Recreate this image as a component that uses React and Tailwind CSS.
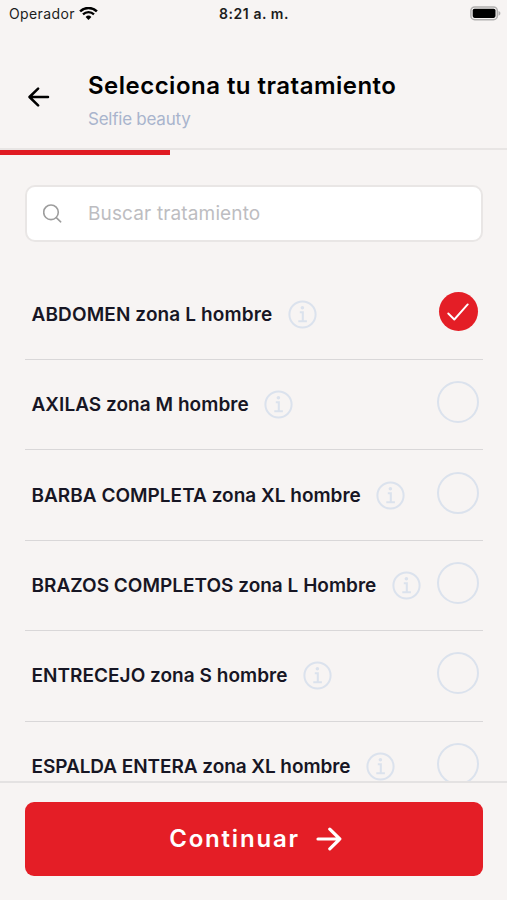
import React, { useState } from "react";

const treatments = [
  { id: 1, name: "ABDOMEN zona L hombre", tracking: "tracking-[0.12px]" },
  { id: 2, name: "AXILAS zona M hombre", tracking: "tracking-[0.04px]" },
  { id: 3, name: "BARBA COMPLETA zona XL hombre", tracking: "tracking-[0.01px]" },
  { id: 4, name: "BRAZOS COMPLETOS zona L Hombre", tracking: "tracking-[0.01px]" },
  { id: 5, name: "ENTRECEJO zona S hombre", tracking: "tracking-[0.03px]" },
  { id: 6, name: "ESPALDA ENTERA zona XL hombre", tracking: "tracking-[-0.06px]" },
];

const WifiIcon = () => (
  <svg width="19" height="14" viewBox="0 0 19 14" fill="none">
    <path d="M1.1 4.4a12.1 12.1 0 0 1 16.8 0" stroke="#000" strokeWidth="2.5" />
    <path d="M4 7.4a8 8 0 0 1 11 0" stroke="#000" strokeWidth="2.3" />
    <path d="M6.6 10a4.2 4.2 0 0 1 5.8 0L9.5 13z" fill="#000" />
  </svg>
);

const BatteryIcon = () => (
  <svg width="31" height="15" viewBox="0 0 31 15" fill="none">
    <rect x="0.9" y="0.9" width="26.4" height="12.8" rx="3.8" stroke="#b1afaf" strokeWidth="1.5" />
    <rect x="2.7" y="2.7" width="22.8" height="9.2" rx="1.8" fill="#000" />
    <path d="M28.5 5c1.3.5 1.9 1.3 1.9 2.3s-.6 1.9-1.9 2.4z" fill="#b1afaf" />
  </svg>
);

const BackIcon = () => (
  <svg width="22" height="20" viewBox="0 0 22 20" fill="none" stroke="#000" strokeWidth="2.5" strokeLinecap="round" strokeLinejoin="round">
    <path d="M20 10H1.7M10.1 1.6 1.5 10l8.6 8.4" />
  </svg>
);

const SearchIcon = () => (
  <svg width="20" height="20" viewBox="0 0 20 20" fill="none" stroke="#9d9d9d" strokeWidth="1.6" strokeLinecap="round">
    <circle cx="8" cy="8.3" r="7.3" />
    <path d="m13.3 13.6 4.4 4.2" />
  </svg>
);

const InfoIcon = () => (
  <svg className="shrink-0" width="29" height="29" viewBox="0 0 29 29" fill="none" stroke="#dbe2ed">
    <circle cx="14.5" cy="14.5" r="13.1" strokeWidth="2" />
    <path d="M11.8 12.2h3v9M10.3 21.2h8.6" strokeWidth="2.1" />
    <circle cx="14.4" cy="7.7" r="1.8" fill="#dbe2ed" stroke="none" />
  </svg>
);

const CheckIcon = () => (
  <svg width="22" height="18" viewBox="0 0 22 18" fill="none" stroke="#fff" strokeWidth="1.9" strokeLinecap="round" strokeLinejoin="round">
    <path d="m1.3 10.5 6 6L20.7 1.4" />
  </svg>
);

const ArrowIcon = () => (
  <svg width="26" height="24" viewBox="0 0 26 24" fill="none" stroke="#fff" strokeWidth="3.2" strokeLinecap="round" strokeLinejoin="round">
    <path d="M2 12h21.8M13.8 2.2 23.8 12l-10 9.8" />
  </svg>
);

// Single treatment in the list
const TreatmentRow = ({ treatment, selected, onSelect }) => (
  <li className="flex h-[90.4px] shrink-0 items-center border-b border-[#d9d7d8] pl-[6.5px] pr-[4px]">
    <span className={`whitespace-nowrap text-[19px] font-semibold leading-none text-[#171624] ${treatment.tracking}`}>
      {treatment.name}
    </span>
    <span className="ml-[15.5px]">
      <InfoIcon />
    </span>
    <button
      onClick={() => onSelect(treatment.id)}
      className="mb-[5px] ml-auto flex size-[42px] shrink-0 items-center justify-center"
    >
      {selected ? (
        <span className="flex size-[39px] items-center justify-center rounded-full bg-[#e41e26]">
          <CheckIcon />
        </span>
      ) : (
        <span className="size-[42px] rounded-full border-[2.5px] border-[#dbe2ed]" />
      )}
    </button>
  </li>
);

const App = () => {
  const [selectedId, setSelectedId] = useState(1);
  const [search, setSearch] = useState("");

  const visible = treatments.filter((t) =>
    t.name.toLowerCase().includes(search.toLowerCase())
  );

  return (
    <div className="flex h-[900px] w-[507px] flex-col overflow-hidden bg-[#f7f4f3] font-['Inter',sans-serif]">
      {/* Status bar */}
      <div className="grid h-[28px] shrink-0 grid-cols-3 items-center pl-[9px] pr-[6px] text-[14px] leading-none text-[#1c1c1c]">
        <div className="flex items-center gap-[4px]">
          <span className="tracking-[0.38px]">Operador</span>
          <WifiIcon />
        </div>
        <span className="pr-[2px] text-center font-semibold tracking-[0.55px]">8:21 a. m.</span>
        <div className="flex justify-end pb-[1px]">
          <BatteryIcon />
        </div>
      </div>

      {/* Header */}
      <header className="flex h-[122px] shrink-0 border-b-2 border-[#e8e5e4] pl-[28px]">
        <button className="mt-[59px] h-5 w-[60px]">
          <BackIcon />
        </button>
        <div className="pt-[43px]">
          <h1 className="whitespace-nowrap text-[24px] font-semibold leading-[30px] tracking-[0.48px] text-black">
            Selecciona tu tratamiento
          </h1>
          <p className="mt-[7px] text-[17px] leading-[22px] tracking-[-0.24px] text-[#a9b4cd]">Selfie beauty</p>
        </div>
      </header>
      <div className="h-[5px] w-[170px] shrink-0 bg-[#e01b22]" />

      {/* Search */}
      <div className="mx-[25px] mt-[30px] flex h-[57px] w-[458px] shrink-0 items-center rounded-[10px] border-2 border-[#e9e6e5] bg-white pl-[16px]">
        <SearchIcon />
        <input
          type="text"
          placeholder="Buscar tratamiento"
          value={search}
          onChange={(e) => setSearch(e.target.value)}
          className="ml-[25px] w-[340px] pt-[1px] text-[19px] tracking-[0.14px] outline-none placeholder:text-[#bdbdc1]"
        />
      </div>

      <ul className="mx-[25px] mt-[27.6px] flex min-h-0 w-[458px] flex-1 flex-col overflow-hidden">
        {visible.map((treatment) => (
          <TreatmentRow
            key={treatment.id}
            treatment={treatment}
            selected={treatment.id === selectedId}
            onSelect={setSelectedId}
          />
        ))}
      </ul>

      {/* Bottom action */}
      <footer className="h-[119px] shrink-0 border-t-2 border-[#e4e2e2] px-[25px] pt-[19px]">
        <button className="flex h-[74px] w-[458px] items-center justify-center gap-[16px] rounded-[9px] bg-[#e41e26] pl-[3px] text-[24px] font-semibold tracking-[1.8px] text-white">
          Continuar
          <ArrowIcon />
        </button>
      </footer>
    </div>
  );
};

export default App;
